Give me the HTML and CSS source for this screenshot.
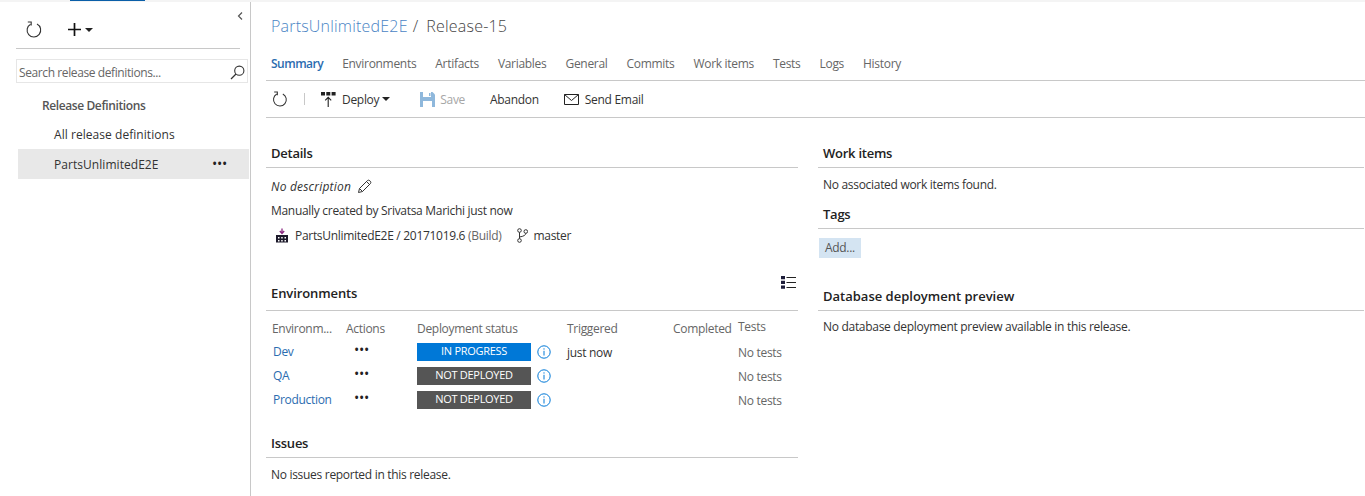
FILE: index.html
```html
<!DOCTYPE html>
<html lang="en">
<head>
    <meta charset="UTF-8">
    <meta name="viewport" content="width=device-width, initial-scale=1.0">
    <title>Release-15</title>
    <link rel="stylesheet" href="styles.css">
</head>
<body>
    <div class="topstrip"><div class="topstrip-active"></div></div>
    <div class="layout">
        <aside class="sidebar">
            <div class="collapse">
                <svg width="6" height="8" viewBox="0 0 6 8"><path d="M5 0.5 L1.5 4 L5 7.5" fill="none" stroke="#555" stroke-width="1.2"/></svg>
            </div>
            <div class="side-tools">
                <svg class="refresh" width="16" height="17" viewBox="0 0 16 17"><path d="M4.6 3.2 A6.8 6.8 0 1 0 11 3.1" fill="none" stroke="#333" stroke-width="1.1"/><path d="M1.8 1 H5.2 V4.6" fill="none" stroke="#333" stroke-width="1.1"/></svg>
                <svg class="plus" width="13" height="13" viewBox="0 0 13 13"><path d="M6.5 0 V13 M0 6.5 H13" stroke="#111" stroke-width="1.7"/></svg>
                <span class="caret"></span>
            </div>
            <div class="search">
                <span>Search release definitions...</span>
                <svg width="15" height="15" viewBox="0 0 15 15"><circle cx="9.3" cy="5.7" r="4.6" fill="none" stroke="#333" stroke-width="1.1"/><path d="M6 9 L1 14" stroke="#333" stroke-width="1.2"/></svg>
            </div>
            <div class="tree-title">Release Definitions</div>
            <div class="tree-item">All release definitions</div>
            <div class="tree-item selected">PartsUnlimitedE2E <span class="dots">•••</span></div>
        </aside>

        <main class="content">
            <div class="title"><span class="title-link">PartsUnlimitedE2E</span><span class="title-sep">/</span>Release-15</div>
            <nav class="tabs">
                <a class="active">Summary</a>
                <a>Environments</a>
                <a>Artifacts</a>
                <a>Variables</a>
                <a>General</a>
                <a>Commits</a>
                <a>Work items</a>
                <a>Tests</a>
                <a>Logs</a>
                <a>History</a>
            </nav>
            <div class="toolbar">
                <svg width="16" height="16" viewBox="0 0 16 17"><path d="M4.6 3.2 A6.8 6.8 0 1 0 11 3.1" fill="none" stroke="#333" stroke-width="1.1"/><path d="M1.8 1 H5.2 V4.6" fill="none" stroke="#333" stroke-width="1.1"/></svg>
                <span class="tool-sep"></span>
                <span class="tool deploy">
                    <svg width="15" height="15" viewBox="0 0 15 15"><path d="M0 0h4v3.500H0zM5.300 0h4v3.500H5.300zM10.600 0h4v3.500H10.600z" fill="#222"/><path d="M7.200 15 V5.500 M4.200 8.300 L7.200 5.300 L10.200 8.300" fill="none" stroke="#222" stroke-width="1.100"/></svg>
                    Deploy<span class="caret"></span>
                </span>
                <span class="tool save">
                    <svg width="15" height="15" viewBox="0 0 15 15"><path d="M0 0H12.5L15 2.5V15H0Z" fill="#8fb8dc"/><path d="M3 0H11V5H3Z" fill="#fff"/><path d="M3 9H12V15H3Z" fill="#fff"/><path d="M9 1H10.500V4H9Z" fill="#8fb8dc"/></svg>
                    Save
                </span>
                <span class="tool abandon">Abandon</span>
                <span class="tool">
                    <svg width="15" height="11" viewBox="0 0 15 11"><path d="M0.5 0.5H14.500V10.500H0.5Z M0.5 0.5 L7.5 6.500 L14.500 0.5" fill="none" stroke="#222"/></svg>
                    Send Email
                </span>
            </div>

            <div class="columns">
                <div class="col-left">
                    <section class="details">
                        <h2>Details</h2>
                        <div class="desc"><em>No description</em>
                            <svg width="15" height="15" viewBox="0 0 15 15"><path d="M1.5 13.500 L2.500 9.500 L10.500 1.500 Q11.500 0.700 12.800 1.700 L13.300 2.200 Q14.300 3.500 13.500 4.500 L5.500 12.500 Z M2.500 9.500 L5.500 12.500 M9.500 2.500 L12.500 5.500" fill="none" stroke="#333"/></svg>
                        </div>
                        <div class="created">Manually created by Srivatsa Marichi just now</div>
                        <div class="artifact">
                            <svg width="14" height="15" viewBox="0 0 14 15"><path d="M1 7H13V14.500H1Z" fill="#1d1a2b"/><path d="M3 9h1.500v1.500H3zM6.200 9h1.500v1.500H6.200zM9.500 9H11v1.500H9.500zM3 12h1.500v1.500H3zM6.200 12h1.500v1.500H6.200zM9.500 12H11v1.500H9.500z" fill="#fff"/><path d="M7 0.500V5M4.800 3 L7 5.500 L9.200 3" fill="none" stroke="#8a2a82" stroke-width="1.300"/></svg>
                            <span class="artifact-name">PartsUnlimitedE2E / 20171019.6 <span class="muted">(Build)</span></span>
                            <svg class="branch" width="11" height="15" viewBox="0 0 11 15"><circle cx="2.500" cy="2.500" r="1.800" fill="none" stroke="#333"/><circle cx="8.800" cy="3.500" r="1.800" fill="none" stroke="#333"/><circle cx="2.500" cy="12.500" r="1.800" fill="none" stroke="#333"/><path d="M2.500 4.300V10.700M8.800 5.300 Q8.800 8 2.500 9" fill="none" stroke="#333"/></svg>
                            <span>master</span>
                        </div>
                    </section>

                    <section class="environments">
                        <div class="view-toggle">
                            <svg width="15" height="13" viewBox="0 0 15 13"><path d="M0 0h4v3.200H0zM0 4.800h4V8H0zM0 9.600h4v3.200H0z" fill="#1d1d3a"/><path d="M5.500 1.500H15M5.500 6.500H15M5.500 11.500H15" stroke="#222" stroke-width="1.100"/></svg>
                        </div>
                        <h2>Environments</h2>
                        <div class="env-grid">
                            <div class="env-head">Environm...</div>
                            <div class="env-head">Actions</div>
                            <div class="env-head">Deployment status</div>
                            <div class="env-head">Triggered</div>
                            <div class="env-head">Completed</div>
                            <div class="env-head tests-head">Tests</div>

                            <a class="env-name">Dev</a>
                            <div class="dots env-dots">•••</div>
                            <div class="status"><span class="badge progress">IN PROGRESS</span><svg class="info" width="14" height="14" viewBox="0 0 14 14"><circle cx="7" cy="7" r="6.200" fill="none" stroke="#0078d7"/><path d="M7 5.800V10.500M7 3.300V4.600" stroke="#0078d7"/></svg></div>
                            <div class="trig">just now</div>
                            <div></div>
                            <div class="muted">No tests</div>

                            <a class="env-name">QA</a>
                            <div class="dots env-dots">•••</div>
                            <div class="status"><span class="badge">NOT DEPLOYED</span><svg class="info" width="14" height="14" viewBox="0 0 14 14"><circle cx="7" cy="7" r="6.200" fill="none" stroke="#0078d7"/><path d="M7 5.800V10.500M7 3.300V4.600" stroke="#0078d7"/></svg></div>
                            <div></div>
                            <div></div>
                            <div class="muted">No tests</div>

                            <a class="env-name">Production</a>
                            <div class="dots env-dots">•••</div>
                            <div class="status"><span class="badge">NOT DEPLOYED</span><svg class="info" width="14" height="14" viewBox="0 0 14 14"><circle cx="7" cy="7" r="6.200" fill="none" stroke="#0078d7"/><path d="M7 5.800V10.500M7 3.300V4.600" stroke="#0078d7"/></svg></div>
                            <div></div>
                            <div></div>
                            <div class="muted">No tests</div>
                        </div>
                    </section>

                    <section class="issues">
                        <h2>Issues</h2>
                        <div class="line">No issues reported in this release.</div>
                    </section>
                </div>

                <div class="col-right">
                    <section>
                        <h2>Work items</h2>
                        <div class="line">No associated work items found.</div>
                    </section>
                    <section class="tags">
                        <h2>Tags</h2>
                        <span class="add-tag">Add...</span>
                    </section>
                    <section class="database">
                        <h2>Database deployment preview</h2>
                        <div class="line">No database deployment preview available in this release.</div>
                    </section>
                </div>
            </div>
        </main>
    </div>
</body>
</html>
```

FILE: styles.css
```css
html, body {
    height: 100%;
}
body {
    font-family: "Open Sans", "Noto Sans", Arial, sans-serif;
    font-size: 12px;
    letter-spacing: -0.3px;
    margin: 0;
    padding: 0;
    background-color: #fff;
    color: #333;
    overflow: hidden;
}
.topstrip {
    height: 2px;
    background-color: #f4f4f4;
}
.topstrip-active {
    width: 75px;
    height: 1px;
    margin-left: 70px;
    background-color: #0a5ea8;
}
.layout {
    display: flex;
    height: 494px;
}
.sidebar {
    width: 250px;
    flex: none;
    border-right: 1px solid #c8c8c8;
    position: relative;
}
.collapse {
    position: absolute;
    top: 5px;
    left: 237px;
}
.side-tools {
    display: flex;
    align-items: center;
    height: 37px;
    margin-left: 16px;
    margin-right: 10px;
    padding: 9px 0 0 10px;
    border-bottom: 1px solid #c8c8c8;
}
.plus {
    margin-left: 26px;
}
.caret {
    display: inline-block;
    width: 0;
    height: 0;
    margin-left: 4px;
    border-left: 4px solid transparent;
    border-right: 4px solid transparent;
    border-top: 4px solid #222;
}
.search {
    display: flex;
    align-items: center;
    justify-content: space-between;
    margin: 10px 2px 0 16px;
    padding: 2px 2px 0;
    height: 20px;
    letter-spacing: -0.4px;
    border: 1px solid #e6e6e6;
    color: #666;
}
.tree-title {
    margin: 14px 0 0 42px;
    font-weight: 600;
    letter-spacing: -0.4px;
    color: #555;
    line-height: 18px;
}
.tree-item {
    display: flex;
    align-items: center;
    justify-content: space-between;
    height: 30px;
    margin: 4px 1px 0 18px;
    padding: 0 22px 0 36px;
    letter-spacing: 0.05px;
    color: #333;
}
.tree-item + .tree-item {
    margin-top: 0;
}
.tree-item.selected {
    background-color: #e8e8e8;
}
.dots {
    font-size: 14px;
    line-height: 14px;
    letter-spacing: -0.3px;
    color: #222;
}
.content {
    flex: 1;
    min-width: 0;
    padding-left: 15px;
}
.title {
    font-size: 16px;
    font-weight: 300;
    letter-spacing: 0.2px;
    line-height: 24px;
    padding: 12px 0 0 5px;
    color: #444;
}
.title-link {
    color: #4a84c4;
}
.title-sep {
    margin: 0 8px 0 5px;
}
.tabs {
    display: flex;
    gap: 19px;
    height: 43px;
    align-items: center;
    padding: 9px 0 0 5px;
    box-sizing: border-box;
    border-bottom: 1px solid #c8c8c8;
    color: #666;
}
.tabs .active {
    font-weight: 600;
    letter-spacing: -0.5px;
    color: #2b6cb0;
}
.toolbar {
    display: flex;
    align-items: center;
    height: 36px;
    padding-left: 6px;
    border-bottom: 1px solid #c8c8c8;
}
.tool-sep {
    width: 1px;
    height: 12px;
    margin: 0 16px 0 16px;
    background-color: #c8c8c8;
}
.tool {
    display: inline-flex;
    align-items: center;
    gap: 6px;
    margin-right: 25px;
}
.tool .caret {
    margin-left: -3px;
}
.deploy {
    margin-right: 30px;
}
.save {
    gap: 5px;
    color: #a6a6a6;
}
.columns {
    display: flex;
}
.col-left {
    width: 532px;
    flex: none;
}
.col-right {
    flex: 1;
    margin: 0 1px 0 20px;
}
h2 {
    font-size: 13px;
    font-weight: 600;
    letter-spacing: -0.25px;
    line-height: 18px;
    margin: 0;
    padding: 0 0 5px 5px;
    border-bottom: 1px solid #c8c8c8;
    color: #222;
}
section {
    position: relative;
}
.details, .col-right > section:first-child {
    padding-top: 26px;
}
.desc {
    display: flex;
    align-items: center;
    gap: 6px;
    height: 18px;
    margin: 9px 0 0 5px;
}
.desc em {
    letter-spacing: 0.2px;
}
.created {
    line-height: 18px;
    margin: 7px 0 0 5px;
}
.artifact {
    display: flex;
    align-items: center;
    height: 18px;
    margin: 6px 0 0 9px;
}
.artifact-name {
    margin-left: 6px;
}
.branch {
    margin: 0 6px 0 15px;
}
.muted {
    color: #666;
}
.environments {
    margin-top: 40px;
}
.environments h2 {
    padding-bottom: 8px;
    letter-spacing: -0.1px;
}
.view-toggle {
    position: absolute;
    top: -8px;
    right: 2px;
}
.env-grid {
    display: grid;
    grid-template-columns: 74px 71px 150px 106px 65px 1fr;
    grid-auto-rows: 24px;
    align-items: center;
    margin: 5px 0 0 6px;
}
.env-head {
    color: #666;
}
.tests-head {
    position: relative;
    top: -2px;
}
.env-name {
    color: #2b6cb0;
    padding: 0 0 1px 1px;
}
.env-dots {
    padding: 0 0 4px 8px;
}
.status {
    display: flex;
    align-items: center;
    gap: 6px;
}
.badge {
    width: 114px;
    height: 18px;
    line-height: 16px;
    font-size: 11px;
    text-align: center;
    color: #fff;
    background-color: #555;
}
.badge.progress {
    background-color: #0078d7;
}
.issues {
    margin-top: 22px;
}
.line {
    line-height: 18px;
    margin: 8px 0 0 5px;
}
.tags {
    margin-top: 11px;
}
.add-tag {
    display: inline-block;
    margin: 9px 0 0 1px;
    padding: 0 6px;
    height: 20px;
    line-height: 20px;
    color: #555;
    background-color: #d4e4f2;
}
.database {
    margin-top: 29px;
}
.database h2 {
    letter-spacing: 0;
}
.database .line {
    margin-top: 7px;
}
```
